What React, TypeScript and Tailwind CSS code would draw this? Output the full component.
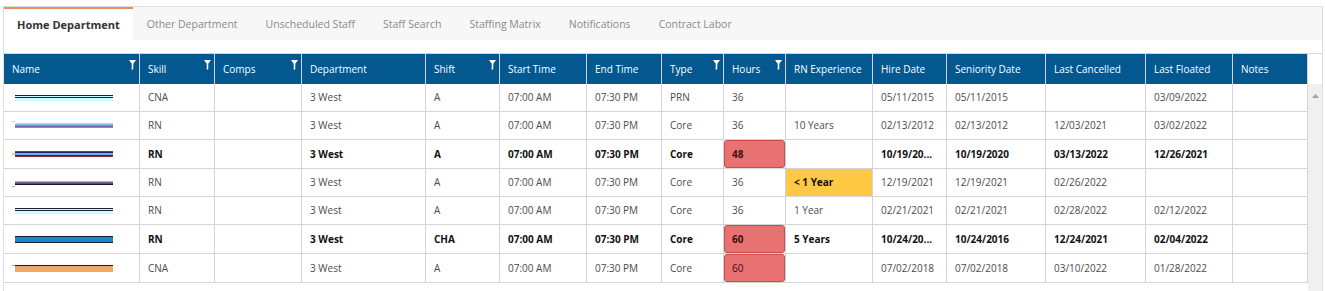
import React from 'react'

type Stripe = [number, string]

type Row = {
  bars: Stripe[]
  mark?: { top: number; h: number; color: string }
  bold?: boolean
  skill: string
  shift: string
  type: string
  hours: string
  hot?: boolean
  exp: string
  expWarn?: boolean
  hire: string
  sen: string
  cancelled: string
  floated: string
  h: string
}

const cols = [
  { name: 'Name', w: 'w-[136px]', filter: true },
  { name: 'Skill', w: 'w-[75px]', filter: true },
  { name: 'Comps', w: 'w-[87px]', filter: true },
  { name: 'Department', w: 'w-[124px]' },
  { name: 'Shift', w: 'w-[74px]', filter: true },
  { name: 'Start Time', w: 'w-[87px]' },
  { name: 'End Time', w: 'w-[75px]' },
  { name: 'Type', w: 'w-[62px]', filter: true },
  { name: 'Hours', w: 'w-[62px]', filter: true },
  { name: 'RN Experience', w: 'w-[87px]' },
  { name: 'Hire Date', w: 'w-[74px]' },
  { name: 'Seniority Date', w: 'w-[99px]' },
  { name: 'Last Cancelled', w: 'w-[100px]' },
  { name: 'Last Floated', w: 'w-[87px]' },
  { name: 'Notes', w: 'w-[75px]' },
]

const tabs = ['Home Department', 'Other Department', 'Unscheduled Staff', 'Staff Search', 'Staffing Matrix', 'Notifications', 'Contract Labor']

const rows: Row[] = [
  {
    bars: [[1, '#1b2230'], [1, '#cdfbff'], [1, '#1b2230'], [3, '#cdfbff']],
    skill: 'CNA', shift: 'A', type: 'PRN', hours: '36', exp: '',
    hire: '05/11/2015', sen: '05/11/2015', cancelled: '', floated: '03/09/2022', h: 'h-[28px]',
  },
  {
    bars: [[1, '#a6dcf2'], [1, '#7cc0ea'], [1, '#8d8fc4'], [1, '#7a6aa2'], [1, '#d07f3a']],
    mark: { top: -2, h: 1, color: '#f6c27a' },
    skill: 'RN', shift: 'A', type: 'Core', hours: '36', exp: '10 Years',
    hire: '02/13/2012', sen: '02/13/2012', cancelled: '12/03/2021', floated: '03/02/2022', h: 'h-[28px]',
  },
  {
    bars: [[1, '#8a3a2c'], [1, '#1c2a6a'], [2, '#6cb0f2'], [1, '#1c2a6a'], [1, '#8a3a2c']],
    mark: { top: 2, h: 2, color: '#f8c880' },
    bold: true, skill: 'RN', shift: 'A', type: 'Core', hours: '48', hot: true, exp: '',
    hire: '10/19/20...', sen: '10/19/2020', cancelled: '03/13/2022', floated: '12/26/2021', h: 'h-[29px]',
  },
  {
    bars: [[1, '#f0a254'], [1, '#7c5fa0'], [1, '#3254a2'], [1, '#161a28']],
    mark: { top: 5, h: 1, color: '#f0a254' },
    skill: 'RN', shift: 'A', type: 'Core', hours: '36', exp: '< 1 Year', expWarn: true,
    hire: '12/19/2021', sen: '12/19/2021', cancelled: '02/26/2022', floated: '', h: 'h-[28px]',
  },
  {
    bars: [[1, '#1b2230'], [1, '#cdfbff'], [1, '#1b2230'], [3, '#cdfbff']],
    skill: 'RN', shift: 'A', type: 'Core', hours: '36', exp: '1 Year',
    hire: '02/21/2021', sen: '02/21/2021', cancelled: '02/28/2022', floated: '02/12/2022', h: 'h-[28px]',
  },
  {
    bars: [[1, '#161a28'], [5, '#1a86d0'], [1, '#161a28']],
    bold: true, skill: 'RN', shift: 'CHA', type: 'Core', hours: '60', hot: true, exp: '5 Years',
    hire: '10/24/20...', sen: '10/24/2016', cancelled: '12/24/2021', floated: '02/04/2022', h: 'h-[29px]',
  },
  {
    bars: [[1, '#161a28'], [6, '#eba96b']],
    mark: { top: 0, h: 1, color: '#e8a060' },
    skill: 'CNA', shift: 'A', type: 'Core', hours: '60', hot: true, exp: '',
    hire: '07/02/2018', sen: '07/02/2018', cancelled: '03/10/2022', floated: '01/28/2022', h: 'h-[29px]',
  },
]

function Funnel() {
  return (
    <svg width="7" height="10" viewBox="0 0 7 10" className="absolute right-[3px] top-[6px]">
      <path d="M0 0 H7 L4.3 3.8 V9 L2.7 10 V3.8 Z" fill="#ffffff" />
    </svg>
  )
}

function NameBar({ row }: { row: Row }) {
  return (
    <div className="relative ml-[11px] w-[98px] flex flex-col">
      {row.mark && (
        <div
          className="absolute left-[-3px] w-[3px]"
          style={{ top: row.mark.top, height: row.mark.h, background: row.mark.color }}
        />
      )}
      {row.bars.map(([h, c], i) => (
        <div key={i} className="w-full" style={{ height: h, background: c }} />
      ))}
    </div>
  )
}

export default function App() {
  const cell = 'shrink-0 border-r border-[#d3d4d8] flex items-center px-[8px] overflow-hidden whitespace-nowrap'

  return (
    <div className="w-[1325px] h-[291px] bg-white overflow-hidden" style={{ fontFamily: '"Open Sans", "Noto Sans", sans-serif' }}>
      <div className="ml-[3px] mt-[6px] w-[1320px] h-[285px] border-l border-r border-t border-[#dddde2] flex flex-col">
        {/* tabs */}
        <div className="h-[33px] bg-[#f7f7f7] flex items-stretch shrink-0">
          {tabs.map((t, i) =>
            i === 0 ? (
              <div key={t} className="bg-white border-t-2 border-[#ec8a64] px-[13px] pt-[1px] flex items-center text-[11px] font-bold text-[#333]">
                {t}
              </div>
            ) : (
              <div key={t} className="px-[14px] pt-[3px] flex items-center text-[10.5px] text-[#8a8a8a]">
                {t}
              </div>
            )
          )}
        </div>
        <div className="h-[13px] shrink-0" />

        {/* header */}
        <div className="flex border-t border-[#d3d4d8] shrink-0">
          <div className="flex h-[30px] bg-[#02588f]">
            {cols.map((c) => (
              <div key={c.name} className={`${c.w} ${cell} relative border-[#c9ced6] text-white text-[10px] pt-[1px]`}>
                {c.name}
                {c.filter && <Funnel />}
              </div>
            ))}
          </div>
          <div className="w-[14px] h-[30px] bg-white" />
        </div>

        {/* body */}
        <div className="flex flex-1 min-h-0">
          <div className="flex flex-col">
            {rows.map((r, idx) => {
              const txt = r.bold ? 'font-bold text-[#111]' : 'text-[#4b4b4b]'
              const vals = [r.skill, '', '3 West', r.shift, '07:00 AM', '07:30 PM', r.type]
              return (
                <div key={idx} className={`flex ${r.h} border-b border-[#d3d4d8] text-[10px] ${txt}`}>
                  <div className={`${cols[0].w} shrink-0 border-r border-[#d3d4d8] flex items-center`}>
                    <NameBar row={r} />
                  </div>
                  {vals.map((v, i) => (
                    <div key={i} className={`${cols[i + 1].w} ${cell}`}>
                      {v}
                    </div>
                  ))}
                  <div className={`${cols[8].w} shrink-0 border-r border-[#d3d4d8] flex`}>
                    {r.hot ? (
                      <div className="flex-1 flex items-center px-[7px] bg-[#e87272] border border-[#cc4a4a] rounded-[3px] text-[#3a1010]">
                        {r.hours}
                      </div>
                    ) : (
                      <div className="flex items-center px-[8px]">{r.hours}</div>
                    )}
                  </div>
                  <div className={`${cols[9].w} ${cell} ${r.expWarn ? 'bg-[#ffc845] font-bold text-[#111]' : ''}`}>
                    {r.exp}
                  </div>
                  <div className={`${cols[10].w} ${cell}`}>{r.hire}</div>
                  <div className={`${cols[11].w} ${cell}`}>{r.sen}</div>
                  <div className={`${cols[12].w} ${cell}`}>{r.cancelled}</div>
                  <div className={`${cols[13].w} ${cell}`}>{r.floated}</div>
                  <div className={`${cols[14].w} ${cell}`}></div>
                </div>
              )
            })}
          </div>
          {/* scrollbar */}
          <div className="w-[14px] bg-[#f0f0f0] flex justify-center pt-[10px]">
            <svg width="7" height="4" viewBox="0 0 7 4">
              <path d="M0 4 L3.5 0 L7 4 Z" fill="#a3a3a3" />
            </svg>
          </div>
        </div>
      </div>
    </div>
  )
}
